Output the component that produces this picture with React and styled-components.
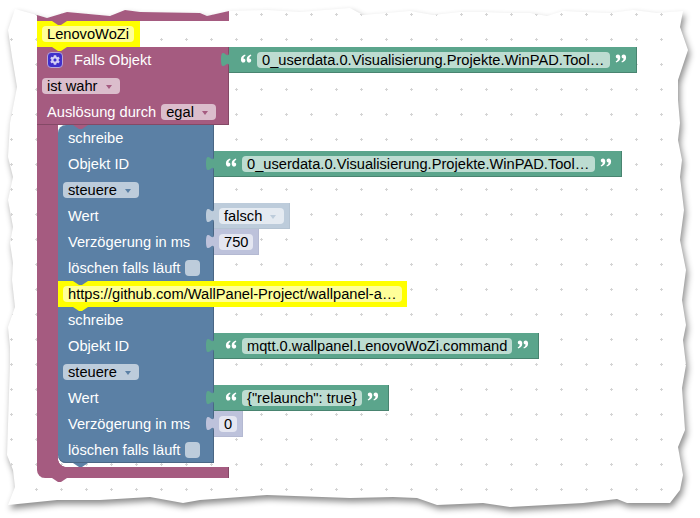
import React from 'react'
import styled, { createGlobalStyle } from 'styled-components'
import { FaCog } from 'react-icons/fa'

const tones = {
  purple: { bg: '#a55b80', dark: '#844966', field: '#dbbdcc', caret: '#a55b80' },
  blue: { bg: '#5b80a5', dark: '#496684', field: '#bdccdb', caret: '#5b80a5' },
  green: { bg: '#5ba58c', dark: '#498470', field: '#bddcd1', caret: '#5ba58c' },
  yellow: { bg: '#ffff00', dark: '#e6e600', field: '#ffff99', caret: '#999' },
  bool: { bg: '#bdccdb', dark: '#b4c3d2', field: '#e4eaf1', caret: '#bdccdb' },
  num: { bg: '#bdc2db', dark: '#b4b9d2', field: '#e4e6f1', caret: '#bdc2db' },
}

const paperEdge = `15,9 37,15 47,18 67,12 110,16 125,10 140,12 200,13 207,16 229,11 267,10 300,12 350,8
363,15 387,13 410,11 433,15 460,12 483,12 507,13 530,13 547,16 563,11 583,12 610,13 633,10 657,13 683,11
680,27 688,50 678,80 678,100 680,123 678,140 682,160 680,177 684,210 680,240 686,270 682,300 686,325
683,340 686,365 682,388 685,430 678,447 683,475 680,490 670,503
627,503 617,499 583,503 510,507 483,503 437,505 417,498 393,497 350,498
267,495 200,500 183,503 150,497 100,500 57,500 8,505
15,487 13,470 7,455 10,363 10,347 8,327 15,307 12,280 13,263 10,243 13,227 8,200 13,177 8,157 10,123 17,87 12,57 8,30`

const GlobalStyle = createGlobalStyle`
  html, body {
    margin: 0;
    padding: 0;
    background: #fff;
  }
  body {
    font-family: "Liberation Sans", Arial, sans-serif;
  }
`

const Stage = styled.div`
  position: relative;
  width: 700px;
  height: 518px;
  overflow: hidden;
  background: #fff;
`

const PaperSvg = styled.svg`
  position: absolute;
  top: 0;
  left: 0;
  width: 700px;
  height: 518px;
  filter: drop-shadow(2px 4px 3px rgba(0, 0, 0, 0.45));
`

const Workspace = styled.div`
  position: relative;
  display: flex;
  flex-direction: column;
  align-items: flex-start;
  padding: 10px 0 0 37px;
  font-size: 14.67px;
  color: #fff;
`

const TopStrip = styled.div`
  position: relative;
  width: 192px;
  height: 11px;
  background: ${tones.purple.bg};
`

const StripEdge = styled(TopStrip)`
  clip-path: polygon(0 5px, 10px 8px, 30px 2px, 73px 6px, 88px 0, 103px 2px, 163px 3px, 170px 6px, 192px 1px, 192px 11px, 0 11px);
`

const Notch = styled.i`
  position: absolute;
  left: 15px;
  width: 15px;
  height: 4px;
  z-index: 3;
  background: ${(p) => tones[p.$tone].bg};
  clip-path: polygon(0 0, 100% 0, 60% 100%, 40% 100%);
  ${(p) => (p.$top ? 'top: 0;' : 'top: 100%;')}
`

const Comment = styled.div`
  position: relative;
  display: flex;
  align-items: center;
  width: ${(p) => p.$w}px;
  height: 26px;
  padding-left: 5px;
  box-sizing: border-box;
  background: #ff0;
`

const Field = styled.span`
  display: inline-flex;
  align-items: center;
  flex: none;
  height: 16px;
  padding: 0 ${(p) => (p.$caret ? 8 : 5)}px 0 5px;
  gap: 8px;
  border-radius: 4px;
  line-height: 16px;
  white-space: nowrap;
  color: #000;
  background: ${(p) => tones[p.$tone].field};
`

const FixedField = styled(Field)`
  width: ${(p) => p.$w}px;
  box-sizing: border-box;
  padding-right: 0;
`

const Caret = styled.i`
  width: 0;
  height: 0;
  margin-top: 1px;
  border-left: 3px solid transparent;
  border-right: 3px solid transparent;
  border-top: 4px solid ${(p) => tones[p.$tone].caret};
`

const Row = styled.div`
  display: flex;
  height: 26px;
`

const Cell = styled.div`
  position: relative;
  display: flex;
  align-items: center;
  flex: none;
  width: ${(p) => p.$w}px;
  height: 26px;
  box-sizing: border-box;
  padding-left: ${(p) => p.$pad}px;
  white-space: nowrap;
  background: ${(p) => tones[p.$tone].bg};
  box-shadow: inset -1px 0 0 ${(p) => tones[p.$tone].dark}
    ${(p) => (p.$edge ? `, inset 0 -1px 0 ${tones[p.$tone].dark}` : '')};
  border-radius: ${(p) => p.$radius || '0'};
`

const Label = styled.span`
  margin-left: ${(p) => p.$gap || 0}px;
`

const Gear = styled.span`
  display: flex;
  align-items: center;
  justify-content: center;
  flex: none;
  width: 16px;
  height: 16px;
  box-sizing: border-box;
  margin-left: 5px;
  border: 1px solid #b9a5d6;
  border-radius: 4px;
  color: #d2cdf5;
  background: #3f2fcb;
`

const Value = styled.div`
  position: relative;
  display: flex;
  align-items: center;
  flex: none;
  height: 26px;
  box-sizing: border-box;
  padding: 0 ${(p) => p.$end}px 0 ${(p) => p.$start}px;
  gap: 5px;
  background: ${(p) => tones[p.$tone].bg};
  box-shadow: inset 0 -1px 0 ${(p) => tones[p.$tone].dark}, inset -1px 0 0 ${(p) => tones[p.$tone].dark};
`

const Tab = styled.svg`
  position: absolute;
  left: -8px;
  top: 5px;
  width: 8px;
  height: 15px;
  fill: ${(p) => tones[p.$tone].bg};
`

const QuoteMark = styled.svg`
  flex: none;
  width: 12px;
  height: 9px;
  margin-top: -3px;
  fill: #fff;
  transform: ${(p) => (p.$flip ? 'rotate(180deg)' : 'none')};
`

const Check = styled.i`
  width: 15px;
  height: 16px;
  margin-left: 5px;
  border-radius: 4px;
  background: ${tones.blue.field};
`

const CBody = styled.div`
  position: relative;
  display: flex;
  &::after {
    content: '';
    position: absolute;
    left: 21px;
    bottom: 0;
    width: 8px;
    height: 8px;
    background: radial-gradient(circle at 100% 0, transparent 7.5px, ${tones.purple.bg} 8px);
  }
`

const Stem = styled.div`
  flex: none;
  width: 21px;
  background: ${tones.purple.bg};
`

const Inner = styled.div`
  display: flex;
  flex-direction: column;
  padding-bottom: 4px;
`

const Statement = styled.div`
  position: relative;
  display: flex;
  flex-direction: column;
  z-index: 1;
`

const FootBar = styled.div`
  position: relative;
  width: 192px;
  height: 11px;
  background: ${tones.purple.bg};
  border-radius: 0 0 0 8px;
  box-shadow: inset -1px 0 0 ${tones.purple.dark};
`

const Quote = ({ flip }) => (
  <QuoteMark viewBox="0 0 11 9" $flip={flip}>
    <path d="M4.6 0.4 C2.2 1 0.4 2.6 0.4 5.4 C0.4 7.4 1.4 8.6 2.8 8.6 C4 8.6 4.9 7.7 4.9 6.5 C4.9 5.3 4 4.6 2.9 4.6 C3 3.2 3.8 2.3 5 1.7 Z" />
    <path d="M10.4 0.4 C8 1 6.2 2.6 6.2 5.4 C6.2 7.4 7.2 8.6 8.6 8.6 C9.8 8.6 10.7 7.7 10.7 6.5 C10.7 5.3 9.8 4.6 8.7 4.6 C8.8 3.2 9.6 2.3 10.8 1.7 Z" />
  </QuoteMark>
)

const Puzzle = ({ tone }) => (
  <Tab viewBox="0 0 8 15" $tone={tone}>
    <path d="M8,0 c0,10 -8,-8 -8,7.5 s8,-2.5 8,7.5 z" />
  </Tab>
)

const StringBlock = ({ text, width }) => (
  <Value $tone="green" $start={11} $end={10}>
    <Puzzle tone="green" />
    <Quote />
    {width ? <FixedField $tone="green" $w={width}>{text}</FixedField> : <Field $tone="green">{text}</Field>}
    <Quote flip />
  </Value>
)

const BlueRow = ({ children, right, radius, edge }) => (
  <Row>
    <Cell $tone="blue" $w={156} $pad={10} $radius={radius} $edge={edge}>{children}</Cell>
    {right}
  </Row>
)

const WriteBlock = ({ objectId, idWidth, value, delay, first }) => (
  <Statement>
    {first && <Notch $tone="purple" $top />}
    <BlueRow radius={first ? '8px 0 0 0' : '0'}><Label>schreibe</Label></BlueRow>
    <BlueRow right={<StringBlock text={objectId} width={idWidth} />}><Label>Objekt ID</Label></BlueRow>
    <Row>
      <Cell $tone="blue" $w={156} $pad={5}>
        <Field $tone="blue" $caret>steuere<Caret $tone="blue" /></Field>
      </Cell>
    </Row>
    <BlueRow right={value}><Label>Wert</Label></BlueRow>
    <BlueRow
      right={
        <Value $tone="num" $start={5} $end={6}>
          <Puzzle tone="num" />
          <Field $tone="num">{delay}</Field>
        </Value>
      }
    >
      <Label>Verzögerung in ms</Label>
    </BlueRow>
    <BlueRow radius={first ? '0' : '0 0 0 8px'} edge={!first}>
      <Label>löschen falls läuft</Label>
      <Check />
    </BlueRow>
    <Notch $tone="blue" />
  </Statement>
)

export default function App() {
  return (
    <Stage>
      <GlobalStyle />
      <PaperSvg viewBox="0 0 700 518">
        <defs>
          <pattern id="grid" x="-1" y="2" width="25" height="25" patternUnits="userSpaceOnUse">
            <path d="M12 11h1v3h-1z M11 12h3v1h-3z" fill="#d4d4d4" shapeRendering="crispEdges" />
          </pattern>
        </defs>
        <polygon points={paperEdge} fill="#fff" />
        <polygon points={paperEdge} fill="url(#grid)" />
      </PaperSvg>

      <Workspace>
        <TopStrip as={StripEdge} />
        <Comment $w={103}>
          <Notch $tone="purple" $top />
          <Field $tone="yellow">LenovoWoZi</Field>
          <Notch $tone="yellow" />
        </Comment>

        <Row>
          <Cell $tone="purple" $w={192} $pad={5}>
            <Gear><FaCog size={10} /></Gear>
            <Label $gap={11}>Falls Objekt</Label>
          </Cell>
          <StringBlock text="0_userdata.0.Visualisierung.Projekte.WinPAD.Tool…" width={353} />
        </Row>
        <Row>
          <Cell $tone="purple" $w={192} $pad={5}>
            <Field $tone="purple" $caret>ist wahr<Caret $tone="purple" /></Field>
          </Cell>
        </Row>
        <Row>
          <Cell $tone="purple" $w={192} $pad={10} $edge>
            <Label>Auslösung durch</Label>
            <Label $gap={5}><Field $tone="purple" $caret>egal<Caret $tone="purple" /></Field></Label>
          </Cell>
        </Row>

        <CBody>
          <Stem />
          <Inner>
            <WriteBlock
              first
              objectId="0_userdata.0.Visualisierung.Projekte.WinPAD.Tool…"
              idWidth={353}
              delay="750"
              value={
                <Value $tone="bool" $start={5} $end={6}>
                  <Puzzle tone="bool" />
                  <Field $tone="bool" $caret>falsch<Caret $tone="bool" /></Field>
                </Value>
              }
            />
            <Comment $w={349}>
              <Field $tone="yellow">https://github.com/WallPanel-Project/wallpanel-a…</Field>
              <Notch $tone="yellow" />
            </Comment>
            <WriteBlock
              objectId="mqtt.0.wallpanel.LenovoWoZi.command"
              delay="0"
              value={<StringBlock text={'{"relaunch": true}'} />}
            />
          </Inner>
        </CBody>
        <FootBar>
          <Notch $tone="purple" />
        </FootBar>
      </Workspace>
    </Stage>
  )
}
